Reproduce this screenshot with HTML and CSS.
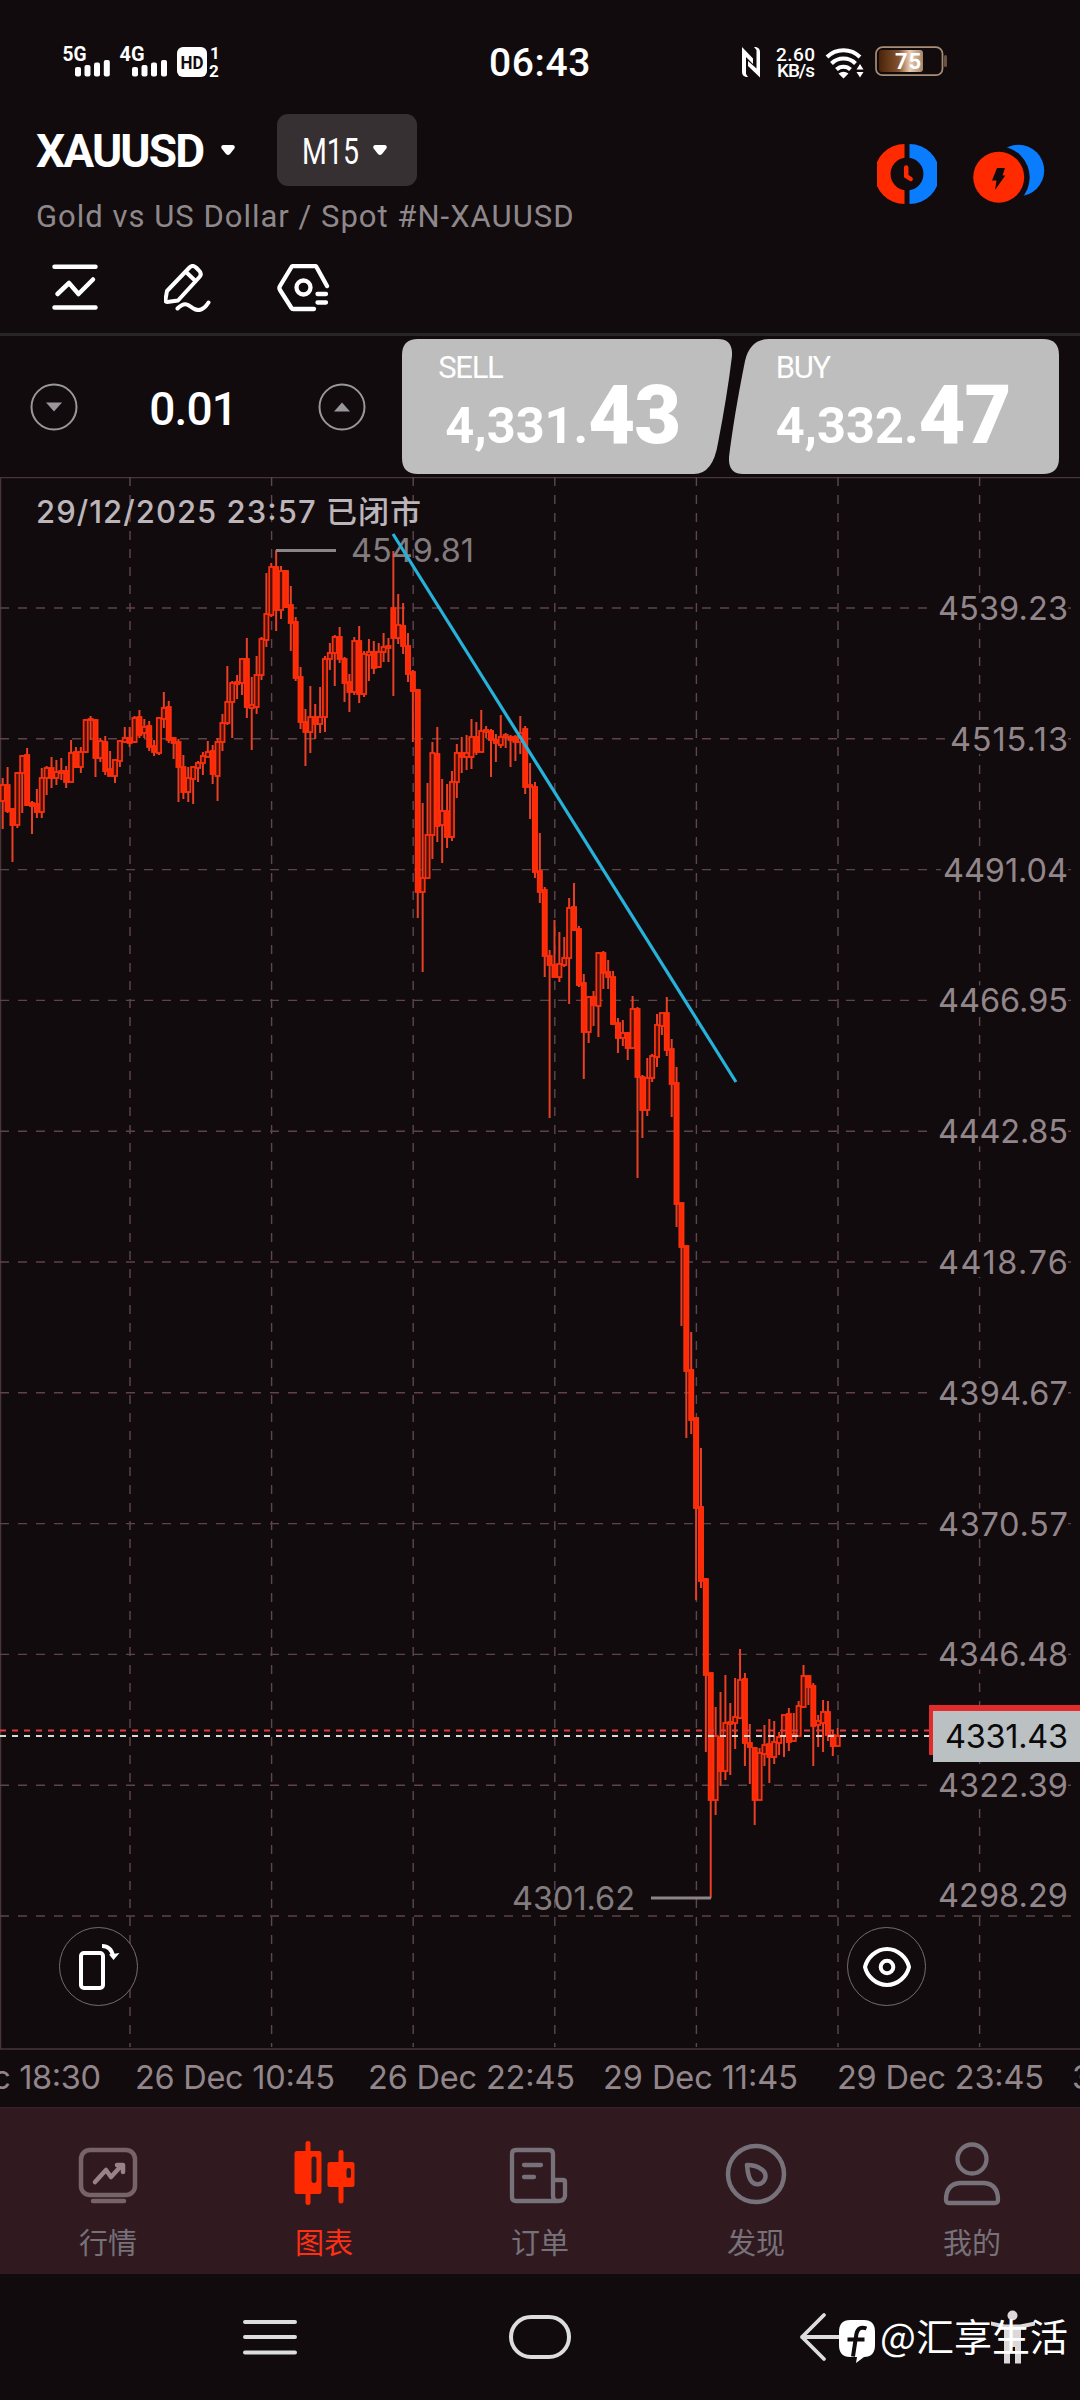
FILE: index.html
```html
<!DOCTYPE html>
<html lang="zh">
<head>
    <meta charset="UTF-8">
    <meta name="viewport" content="width=device-width, initial-scale=1.0">
    <title>XAUUSD</title>
    <link rel="stylesheet" href="styles.css">
</head>
<body>
    <div class="status">
        <svg class="signals" width="160" height="50" viewBox="62 37 160 50" fill="#fff">
            <g class="net">
                <text x="62.500" y="61" textLength="24" lengthAdjust="spacingAndGlyphs">5G</text>
                <text x="119.500" y="61" textLength="25" lengthAdjust="spacingAndGlyphs">4G</text>
            </g>
            <rect x="75" y="67" width="6" height="9.500" rx="2"/>
            <rect x="84.500" y="65" width="6" height="11.500" rx="2"/>
            <rect x="94" y="62.500" width="6" height="14" rx="2"/>
            <rect x="103.800" y="60" width="6" height="16.500" rx="2"/>
            <rect x="132" y="67" width="6" height="9.500" rx="2"/>
            <rect x="141.500" y="65" width="6" height="11.500" rx="2"/>
            <rect x="151" y="62.500" width="6" height="14" rx="2"/>
            <rect x="161" y="60" width="6" height="16.500" rx="2"/>
            <rect x="177" y="47" width="30" height="30" rx="6"/>
            <text class="hd" x="180.500" y="69" textLength="23" lengthAdjust="spacingAndGlyphs">HD</text>
            <text class="sim" x="210" y="59">1</text>
            <text class="sim" x="209" y="76.500">2</text>
        </svg>
        <span class="clock">06:43</span>
        <svg class="indicators" width="210" height="50" viewBox="740 37 210 50" fill="none">
            <path d="M742 47L753 58.500V64L746 57V74l2 3c-4 0-6-1.500-6-5.500zM754 47c4 0 6 1.500 6 5.500V77.500L748 66V61L756.500 68.500V50z" fill="#fff"/>
            <g class="speed">
                <text x="776" y="61" textLength="39">2.60</text>
                <text x="777" y="77" textLength="38">KB/s</text>
            </g>
            <g stroke="#fff" stroke-width="4">
                <path d="M827 57a23.500 23.500 0 0 1 33 0"/>
                <path d="M831.500 63.500a17 17 0 0 1 24 0"/>
                <path d="M836.500 69.500a10 10 0 0 1 14 0"/>
            </g>
            <path d="M838.500 73.500q5-3.500 10 0l-5 5zM856.500 69.500h7l-3.500-5.500zM856.500 72h7l-3.500 5.500z" fill="#fff"/>
            <defs>
                <linearGradient id="charge">
                    <stop offset="0" stop-color="#4a2309"/>
                    <stop offset="0.450" stop-color="#85522e"/>
                    <stop offset="0.700" stop-color="#e9cdb5"/>
                    <stop offset="1" stop-color="#a58468"/>
                </linearGradient>
            </defs>
            <rect x="876" y="47.200" width="66.500" height="28" rx="6.500" stroke="#a88d76" stroke-width="1.700"/>
            <rect x="879" y="50" width="44" height="22" rx="3" fill="url(#charge)"/>
            <rect x="944" y="55" width="3" height="12" rx="1.500" fill="#6b5240"/>
            <text class="charge" x="895" y="69" textLength="26">75</text>
        </svg>
    </div>

    <header class="header">
        <div class="symbol-box">
            <div class="symbol-row">
                <span class="symbol">XAUUSD</span>
                <svg class="caret" width="14" height="10" viewBox="0 0 14 10"><path d="M2 0h10q3 1 1 4L9 9q-2 2-4 0L1 4Q-1 1 2 0z" fill="#fff"/></svg>
                <span class="period">
                    <span class="period-name">M15</span>
                    <svg width="14" height="10" viewBox="0 0 14 10"><path d="M2 0h10q3 1 1 4L9 9q-2 2-4 0L1 4Q-1 1 2 0z" fill="#fff"/></svg>
                </span>
            </div>
            <div class="symbol-desc">Gold vs US Dollar / Spot #N-XAUUSD</div>
            <div class="tools">
                <svg width="46" height="48" viewBox="0 0 46 48" fill="none" stroke="#fff" stroke-width="4.500" stroke-linecap="round" stroke-linejoin="round">
                    <path d="M2.500 2.700h41M2.500 43.500h41M5.500 30l11.500-11 9.500 11L41 15.500"/>
                </svg>
                <svg width="47" height="48" viewBox="0 0 47 48" fill="none" stroke="#fff" stroke-width="4" stroke-linecap="round" stroke-linejoin="round">
                    <path d="M3 27L25.500 3.500q3-3 6.500 0l2.500 2.500q4 3.500 1 7L14 36.500 3 38q-2 0-1.500-2.500zM22 8l9.500 9"/>
                    <path d="M13.500 44.500c8-8 11-3 16 0s10 2 15-6"/>
                </svg>
                <svg width="53" height="48" viewBox="0 0 53 48" fill="none" stroke="#fff" stroke-width="4.300" stroke-linecap="round" stroke-linejoin="round">
                    <path d="M50 22L39.500 3Q39 2 38 2H16.500q-1.500 0-2 1L3 22q-1.200 2 0 4l11.500 18q.5 1 2 1H37"/>
                    <circle cx="26.500" cy="23.500" r="7"/>
                    <path d="M40.500 30h8.500M40.500 38.500h8.500"/>
                </svg>
            </div>
        </div>
        <div class="header-actions">
            <svg width="60" height="60" viewBox="-30 -30 60 60" fill="none">
                <path d="M-2.500-30v13.700a16.500 16.500 0 0 0 0 32.600V30a30 30 0 0 1 0-60z" fill="#ff2a00"/>
                <path d="M2.500-30v13.700a16.500 16.500 0 0 1 0 32.600V30a30 30 0 0 0 0-60z" fill="#0a7dff"/>
                <path d="M-.8-6.500V2l4.500 3" stroke="#ff2a00" stroke-width="4.500" stroke-linecap="round"/>
            </svg>
            <svg width="72" height="60" viewBox="973 144 72 60">
                <circle cx="1018.500" cy="170.500" r="25.700" fill="#0a7dff"/>
                <circle cx="998.700" cy="177.300" r="31" fill="#110b0e"/>
                <circle cx="998.700" cy="177.300" r="25.500" fill="#ff2a00"/>
                <path d="M997 168h8l-2.500 7.500h2.800L995 190l1.500-9.500H992z" fill="#110b0e"/>
            </svg>
        </div>
    </header>

    <section class="trade">
        <div class="volume">
            <svg width="48" height="48" viewBox="-24 -24 48 48"><circle r="22.500" fill="none" stroke="#99979a" stroke-width="2"/><path d="M-8-4.500H8L0 4.500z" fill="#99979a"/></svg>
            <span class="lots">0.01</span>
            <svg width="48" height="48" viewBox="-24 -24 48 48"><circle r="22.500" fill="none" stroke="#99979a" stroke-width="2"/><path d="M-8 4.500H8L0-4.500z" fill="#99979a"/></svg>
        </div>
        <div class="quote sell">
            <svg class="quote-bg" width="330" height="135" viewBox="0 0 330 135"><path d="M16 0H316Q331 0 330 17Q325 58 316 104Q311 135 292 135H16Q0 135 0 119V16Q0 0 16 0z" fill="#bebebe"/></svg>
            <span class="side">SELL</span>
            <span class="price">4,331.<b>43</b></span>
        </div>
        <div class="quote buy">
            <svg class="quote-bg" width="330" height="135" viewBox="0 0 330 135"><path d="M40 0H314Q330 0 330 16V119Q330 135 314 135H14Q-1 135 0 118Q5 77 16 22Q21 0 40 0z" fill="#bebebe"/></svg>
            <span class="side">BUY</span>
            <span class="price">4,332.<b>47</b></span>
        </div>
    </section>

    <main class="chart">
        <svg class="plot" width="1080" height="1630" viewBox="0 477 1080 1630">
            <g id="grid"></g>
            <g id="candles"></g>
            <path d="M0 1730.500H929" stroke="#dc3c3c" stroke-width="2" stroke-dasharray="6 6"/>
            <path d="M0 1736H929" stroke="#d9d6d3" stroke-width="2.200" stroke-dasharray="6 6"/>
            <g class="extremes">
                <path d="M276 550.500H336M651 1898H711" stroke="#8c8486" stroke-width="2.800"/>
                <text x="351" y="562" textLength="123">4549.81</text>
                <text x="512" y="1910" textLength="123">4301.62</text>
            </g>
            <path d="M393 534L736 1082" stroke="#27b2da" stroke-width="3.200"/>
            <text class="closed" x="36" y="522.500" textLength="385">29/12/2025 23:57 已闭市</text>
            <g id="prices"></g>
            <path d="M929 1705h151v50H929z" fill="#e22b2b"/>
            <path d="M933 1711h147v51H933z" fill="#bbc0c3"/>
            <text class="last" x="945" y="1748" textLength="123">4331.43</text>
            <g class="times">
                <text x="-97" y="2089" textLength="198">25 Dec 18:30</text>
                <text x="135" y="2089" textLength="200">26 Dec 10:45</text>
                <text x="368" y="2089" textLength="207">26 Dec 22:45</text>
                <text x="603" y="2089" textLength="195">29 Dec 11:45</text>
                <text x="837" y="2089" textLength="207">29 Dec 23:45</text>
                <text x="1072" y="2089" textLength="207">30 Dec 11:45</text>
            </g>
        </svg>
        <button class="round rotate">
            <svg width="42" height="48" viewBox="0 0 42 48" fill="none" stroke="#fff" stroke-width="4">
                <rect x="3" y="10" width="22" height="35" rx="3"/>
                <path d="M24 3q9 0 11 10"/>
                <path d="M31 11.500l4.500 5.500 6-7z" fill="#fff" stroke="none"/>
            </svg>
        </button>
        <button class="round eye">
            <svg width="48" height="42" viewBox="0 0 48 42" fill="none" stroke="#fff" stroke-width="4">
                <path d="M2 21C4 12 13 3 24 3s20 9 22 18c-2 9-11 18-22 18S4 30 2 21z"/>
                <circle cx="24" cy="21" r="6.300"/>
            </svg>
        </button>
    </main>

    <nav class="tabs">
        <a class="tab">
            <svg width="66" height="66" viewBox="0 0 66 66" fill="none" stroke="#77636a" stroke-width="4.500" stroke-linecap="round" stroke-linejoin="round">
                <rect x="6" y="9" width="54" height="45" rx="9"/>
                <path d="M18 60h31"/>
                <path d="M20 41l11-12 5 7 10-11M42 24h6v7" stroke="#978389"/>
            </svg>
            <span>行情</span>
        </a>
        <a class="tab active">
            <svg width="66" height="66" viewBox="0 0 66 66" fill="#ff2a00">
                <path d="M14.500 2q0-2 2.500-2t2.500 2v8H28q2.500 0 2.500 2.500v38q0 2.500-2.500 2.500h-8.500v9q0 2-2.500 2t-2.500-2v-9H6q-2.500 0-2.500-2.500v-38Q3.500 10 6 10h8.500zM20.500 18v21q0 3 2.500 3t2.500-3V18q0-2.500-2.500-2.500T20.500 18z" fill-rule="evenodd"/>
                <path d="M47.500 11q0-2 2.500-2t2.500 2v10H61q2.500 0 2.500 2.500v20q0 2.500-2.500 2.500h-8.500v14.500q0 2-2.500 2t-2.500-2V46H39q-2.500 0-2.500-2.500v-20Q36.500 21 39 21h8.500zM55.500 29v6q0 2 2.300 2t2.200-2v-6q0-2-2.200-2t-2.300 2z" fill-rule="evenodd"/>
            </svg>
            <span>图表</span>
        </a>
        <a class="tab">
            <svg width="66" height="66" viewBox="0 0 66 66" fill="none" stroke="#77717a" stroke-width="4.300" stroke-linecap="round" stroke-linejoin="round">
                <path d="M52 60H9q-4 0-4-4V13q0-4 4-4h33q4 0 4 4v42q0 5 5.500 5t6.500-5V41q0-2-2-2H46"/>
                <path d="M17 24h17M17 36h10"/>
            </svg>
            <span>订单</span>
        </a>
        <a class="tab">
            <svg width="66" height="66" viewBox="0 0 66 66" fill="none" stroke="#77717a" stroke-width="4.500" stroke-linejoin="round">
                <circle cx="33" cy="33" r="28"/>
                <path d="M24 24q9 0 14 4a8 8 0 1 1-9 13q-4-4-5-17z"/>
            </svg>
            <span>发现</span>
        </a>
        <a class="tab">
            <svg width="66" height="66" viewBox="0 0 66 66" fill="none" stroke="#77717a" stroke-width="4.300" stroke-linejoin="round">
                <circle cx="33" cy="18" r="14.500"/>
                <path d="M21 42h24q14 1 14 17 0 3-3.500 3h-45Q7 62 7 59q0-16 14-17z"/>
            </svg>
            <span>我的</span>
        </a>
    </nav>

    <footer class="sysnav">
        <svg width="54" height="46" viewBox="0 0 54 46" fill="none" stroke="#ddd" stroke-width="4" stroke-linecap="round"><path d="M2 8h50M2 23h50M2 38.500h50"/></svg>
        <svg width="64" height="46" viewBox="0 0 64 46" fill="none" stroke="#ddd" stroke-width="4"><rect x="3" y="3" width="58" height="40" rx="20"/></svg>
        <svg width="54" height="50" viewBox="0 0 54 50" fill="none" stroke="#ddd" stroke-width="3.800" stroke-linecap="round" stroke-linejoin="round"><path d="M25 3L3 25l22 22M3 25h48"/></svg>
        <svg class="person" width="48" height="56" viewBox="0 0 48 56" fill="#dcd8d9">
            <circle cx="23.500" cy="5.500" r="5"/>
            <path d="M2 11.500l14 3h15l15-3v4l-14 3V53.500h-6V37h-5v16.500h-6V18.500l-13-3z"/>
        </svg>
        <div class="watermark">
            <svg width="38" height="46" viewBox="0 0 38 46">
                <path d="M12 1h14q11 0 11 12v13q0 12-11 12l-8 6 1-6h-7Q1 38 1 26V13Q1 1 12 1z" fill="#fff"/>
                <path d="M28.500 9.500q-8-3-10 5l-3.500 23M9.500 20.500h17" fill="none" stroke="#110b0e" stroke-width="4"/>
            </svg>
            <span>@汇享生活</span>
        </div>
    </footer>

    <script src="chart.js"></script>
</body>
</html>
```
FILE: styles.css
```css
* {
    box-sizing: border-box;
}
body {
    width: 1080px;
    height: 2400px;
    margin: 0;
    overflow: hidden;
    display: flex;
    flex-direction: column;
    background-color: #110b0e;
    color: #fff;
    font-family: Roboto, "Noto Sans CJK SC", sans-serif;
}
svg {
    display: block;
    flex: none;
}
.status {
    height: 114px;
    padding: 37px 130px 0 62px;
    display: grid;
    grid-template-columns: 427px 251px 210px;
}
.clock {
    font-size: 39px;
    font-weight: 500;
    line-height: 52px;
    letter-spacing: 0.6px;
}
.net {
    font-size: 20px;
    font-weight: 700;
}
.hd {
    font-size: 19px;
    font-weight: 700;
    fill: #110b0e;
}
.sim {
    font-size: 17px;
    font-weight: 700;
}
.speed {
    font-size: 19px;
    font-weight: 500;
    fill: #fff;
}
.charge {
    font-size: 22px;
    font-weight: 700;
    fill: #fff;
}
.header {
    height: 222px;
    padding: 0 35px 0 36px;
    display: flex;
    justify-content: space-between;
    border-bottom: 3px solid #282526;
}
.symbol-row {
    display: flex;
    align-items: center;
    height: 72px;
}
.symbol {
    width: 185px;
    padding-top: 2px;
    font-size: 46px;
    font-weight: 700;
    letter-spacing: -1.9px;
}
.period {
    width: 140px;
    height: 72px;
    margin-left: 42px;
    padding: 0 30px 0 25px;
    display: flex;
    align-items: center;
    justify-content: space-between;
    border-radius: 11px;
    background-color: #363032;
}
.period-name {
    width: 56px;
    padding-top: 2px;
    font-size: 37px;
    white-space: nowrap;
    transform: scaleX(0.77);
    transform-origin: left;
}
.symbol-desc {
    height: 60px;
    line-height: 62px;
    color: #8e888b;
    font-size: 31px;
    letter-spacing: 1px;
    white-space: nowrap;
}
.tools {
    display: flex;
    margin: 18px 0 0 16px;
}
.tools svg {
    margin-right: 66px;
}
.header-actions {
    display: flex;
    gap: 36px;
    padding-top: 30px;
}
.trade {
    height: 141px;
    padding: 3px 22px 3px 30px;
    display: flex;
}
.volume {
    width: 337px;
    margin-right: 36px;
    display: flex;
    align-items: center;
    justify-content: space-between;
}
.lots {
    margin: 4px 10px 0 0;
    font-size: 46px;
    font-weight: 500;
    letter-spacing: -0.8px;
}
.quote {
    position: relative;
    width: 330px;
    height: 135px;
    display: flex;
    flex-direction: column;
    padding: 11px 0 0 36px;
}
.buy {
    margin-left: -3px;
    padding-left: 47px;
}
.quote-bg {
    position: absolute;
    top: 0;
    left: 0;
}
.side {
    position: relative;
    height: 36px;
    line-height: 36px;
    font-size: 31px;
    letter-spacing: -1.3px;
}
.price {
    position: relative;
    padding-left: 7px;
    height: 76px;
    line-height: 60px;
    font-size: 50.5px;
    font-weight: 700;
    white-space: nowrap;
}
.buy .price {
    padding-left: 0;
}
.price b {
    font-size: 81px;
    letter-spacing: -1px;
}
.chart {
    position: relative;
    height: 1630px;
}
.plot {
    font-family: Inter, "Noto Sans CJK SC", sans-serif;
    font-size: 32.5px;
}
.extremes text {
    fill: #837c7e;
}
.closed {
    fill: #bcb5b9;
    font-size: 31px;
    font-weight: 500;
}
.price-label,
.times text {
    fill: #92868a;
}
.last {
    fill: #0b0b0b;
}
.round {
    position: absolute;
    top: 1450px;
    width: 79px;
    height: 79px;
    padding: 0;
    display: flex;
    align-items: center;
    justify-content: center;
    border: 1px solid #736d70;
    border-radius: 50%;
    background-color: #110b0e;
}
.rotate {
    left: 59px;
}
.eye {
    left: 847px;
}
.tabs {
    height: 167px;
    display: grid;
    grid-template-columns: repeat(5, 1fr);
    background-color: #301a20;
    border-top: 1px solid #35222a;
}
.tab {
    padding-top: 33px;
    display: flex;
    flex-direction: column;
    align-items: center;
    color: #77717a;
    font-size: 29px;
}
.tab span {
    margin-top: 17px;
    line-height: 40px;
}
.tab.active {
    color: #ff2f14;
}
.sysnav {
    position: relative;
    height: 126px;
    padding-left: 243px;
    display: flex;
    align-items: center;
}
.sysnav svg:nth-child(2) {
    margin-left: 211px;
}
.sysnav svg:nth-child(3) {
    margin-left: 227px;
}
.person {
    position: absolute;
    left: 989px;
    top: 36px;
}
.watermark {
    position: absolute;
    left: 838px;
    top: 45px;
    display: flex;
    gap: 4px;
}
.watermark span {
    font-family: "Noto Sans CJK SC", sans-serif;
    font-size: 38px;
    line-height: 40px;
    margin-top: -4px;
    white-space: nowrap;
}
```
FILE: chart.js
```javascript
// high, body top, body bottom, low, 1 = rising (hollow)
const candles = [
    [778,785,801,829,1],[767,785,811,813,0],[808,809,825,862,0],[772,773,825,828,1],[755,756,773,813,1],
    [748,755,805,806,0],[801,803,806,834,0],[789,804,812,818,0],[768,778,812,818,1],[766,768,778,795,1],
    [757,768,778,788,0],[760,772,778,785,1],[758,771,773,780,1],[766,771,782,788,0],[740,753,782,782,1],
    [747,752,767,768,0],[747,752,767,773,1],[719,720,752,753,1],[716,719,720,740,1],[719,720,758,777,0],
    [738,741,758,762,1],[736,742,771,775,0],[751,769,776,776,0],[759,760,776,783,1],[740,741,761,767,1],
    [727,738,742,743,1],[727,738,743,747,0],[716,718,742,743,1],[710,717,735,738,0],[719,727,733,738,1],
    [721,726,747,751,0],[740,746,752,756,0],[717,718,753,755,1],[692,708,719,728,1],[701,707,740,743,0],
    [737,738,743,759,0],[739,742,767,802,0],[755,767,792,799,0],[767,778,792,802,1],[767,767,779,804,1],
    [761,763,768,782,1],[752,756,763,775,1],[741,752,757,757,1],[745,751,774,784,0],[738,742,776,801,1],
    [714,723,742,751,1],[666,702,723,725,1],[681,683,702,738,1],[675,682,684,699,1],[658,659,683,695,1],
    [638,659,707,718,0],[677,705,708,750,1],[656,675,707,714,1],[637,639,675,680,1],[573,614,640,647,1],
    [563,567,615,617,1],[550,567,610,631,0],[566,571,610,619,1],[570,571,607,608,0],[586,605,623,651,0],
    [617,622,678,681,0],[667,677,722,729,0],[709,722,732,766,0],[686,717,732,753,1],[704,717,724,739,0],
    [687,717,724,733,1],[656,659,717,732,1],[643,653,659,670,1],[635,637,653,686,1],[627,637,659,663,0],
    [657,659,683,702,0],[674,682,692,712,0],[637,641,692,695,1],[626,641,694,703,0],[651,654,694,697,1],
    [639,652,655,681,1],[641,652,668,674,0],[643,652,667,668,1],[633,647,652,662,1],[638,646,648,662,1],
    [551,608,638,696,0],[594,625,638,644,1],[603,626,646,654,0],[633,646,674,682,0],[670,672,691,742,0],
    [689,690,892,918,0],[803,878,892,972,1],[783,835,878,878,1],[742,753,835,859,1],[727,754,826,842,0],
    [779,811,825,863,1],[784,811,837,848,0],[771,782,837,841,1],[744,753,782,798,1],[737,753,757,773,0],
    [735,753,757,770,1],[719,737,757,769,1],[722,737,752,755,0],[710,731,752,752,1],[726,730,732,738,1],
    [729,731,740,777,0],[734,740,743,762,0],[715,737,745,748,1],[733,735,737,748,1],[735,737,740,767,0],
    [735,737,742,761,0],[716,733,742,754,1],[726,729,787,794,0],[763,785,787,819,0],[782,787,872,878,0],
    [833,871,892,903,0],[887,890,956,977,0],[950,956,965,1118,0],[920,965,977,977,0],[932,964,977,982,1],
    [937,958,965,967,1],[898,908,958,1004,1],[883,907,930,931,0],[926,929,985,987,0],[974,983,1032,1079,0],
    [996,997,1032,1043,1],[991,997,1005,1026,0],[952,953,1006,1037,1],[951,953,973,989,0],[960,972,977,989,0],
    [971,977,1024,1025,0],[1018,1023,1038,1053,0],[1020,1033,1038,1046,1],[1032,1033,1048,1060,0],[996,1009,1048,1049,1],
    [1007,1009,1077,1178,0],[1075,1077,1110,1138,0],[1058,1078,1110,1116,1],[1054,1056,1078,1082,1],[1014,1025,1057,1067,1],
    [1013,1013,1026,1035,1],[997,1013,1050,1056,0],[1039,1049,1084,1117,0],[1067,1083,1204,1227,0],[1203,1203,1247,1326,0],
    [1246,1246,1371,1438,0],[1332,1370,1420,1434,0],[1418,1418,1508,1600,0],[1448,1507,1581,1588,0],[1578,1579,1675,1752,0],
    [1673,1673,1800,1898,0],[1707,1736,1800,1815,1],[1692,1737,1771,1786,0],[1675,1723,1771,1780,1],[1703,1722,1724,1775,1],
    [1678,1717,1723,1749,1],[1649,1680,1718,1719,1],[1673,1679,1743,1766,0],[1724,1743,1747,1784,0],[1747,1748,1800,1825,0],
    [1748,1753,1800,1800,1],[1725,1745,1754,1766,1],[1719,1744,1757,1783,0],[1721,1742,1757,1764,1],[1732,1737,1743,1755,1],
    [1715,1715,1736,1757,1],[1708,1714,1742,1751,0],[1713,1734,1741,1742,1],[1701,1706,1736,1736,1],[1665,1676,1707,1708,1],
    [1676,1676,1687,1705,0],[1683,1686,1726,1766,0],[1715,1721,1725,1747,1],[1700,1712,1723,1752,1],[1701,1712,1735,1741,0],
    [1730,1735,1746,1756,0],[1728,1736,1746,1746,1]
];
const prices = ['4539.23', '4515.13', '4491.04', '4466.95', '4442.85', '4418.76', '4394.67', '4370.57', '4346.48', '4322.39', '4298.29'];

// grid
let grid = '<path d="M0 477.5H1080M0 2049H1080M.5 477V2049" stroke="#49343a" stroke-width="1.5"/>';
for (let i = 0; i < 7; i++) {
    const x = 130 + i * 141.6;
    grid += `<path d="M${x} 477V2047" stroke="#5f464c" stroke-width="1.4" stroke-dasharray="9 9"/>`;
}
for (let i = 0; i < 11; i++) {
    const y = 608 + i * 130.8;
    grid += `<path d="M0 ${y}H1071" stroke="#5f4347" stroke-width="1.4" stroke-dasharray="9 9"/>`;
}
document.getElementById('grid').innerHTML = grid;

// candles
let bars = '';
candles.forEach((c, i) => {
    const x = 837.7 - (candles.length - 1 - i) * 4.883;
    bars += `<path d="M${x} ${c[0]}V${c[1]}M${x} ${c[2]}V${c[3]}" stroke="#e93f24" stroke-width="2"/>`;
    bars += `<rect x="${x - 2.1}" y="${c[1]}" width="4.2" height="${c[2] - c[1]}" fill="${c[4] ? '#4a120c' : '#ff2a05'}" stroke="#fb300c" stroke-width="1.8"/>`;
});
document.getElementById('candles').innerHTML = bars;

// price scale
let labels = '';
prices.forEach((p, i) => {
    const y = i === 10 ? 1895 : 608 + i * 130.8;
    const w = i === 1 ? 118 : i === 2 ? 125 : 130;
    labels += `<rect x="${1066 - w}" y="${y - 15}" width="${w + 2}" height="30" fill="#110b0e"/>`;
    labels += `<text class="price-label" x="${1068 - w}" y="${y + 12}" textLength="${w}">${p}</text>`;
});
document.getElementById('prices').innerHTML = labels;
```
